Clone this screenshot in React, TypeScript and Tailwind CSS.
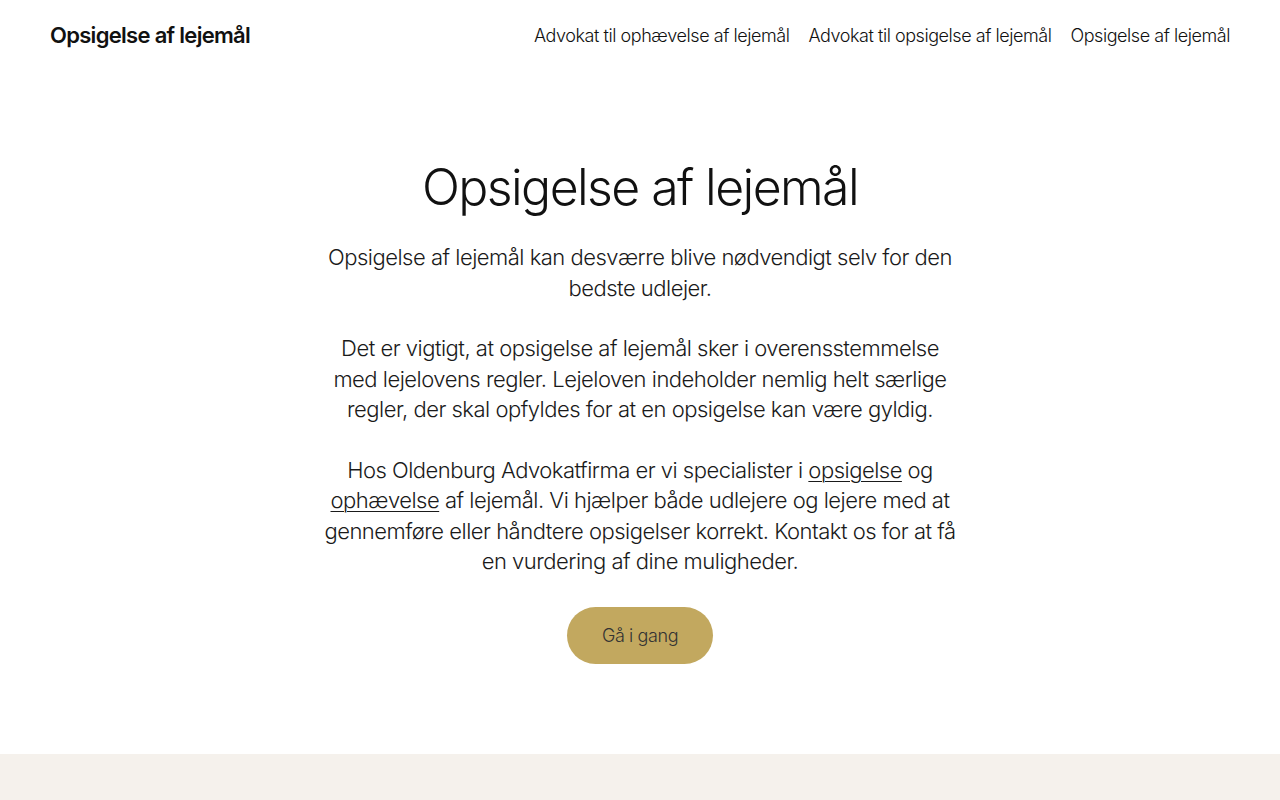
const navLinks = [
  "Advokat til ophævelse af lejemål",
  "Advokat til opsigelse af lejemål",
  "Opsigelse af lejemål",
];

const App = () => {
  return (
    <div className="min-h-screen bg-white text-[#111] font-['Inter',sans-serif]">
      {/* HEADER */}
      <header className="flex h-[70px] items-center justify-between px-[50px]">
        <a className="text-[22px] font-semibold tracking-[-0.7px] text-[#111]">
          Opsigelse af lejemål
        </a>
        <nav className="flex items-center gap-[19px]">
          {navLinks.map((link) => (
            <a key={link} className="text-[18px] font-light tracking-[-0.45px] text-[#111]">
              {link}
            </a>
          ))}
        </nav>
      </header>

      {/* HERO */}
      <section className="flex h-[684px] flex-col items-center pt-[84px]">
        <h1 className="text-[50px] font-light leading-[66px] tracking-[-1.6px] text-[#111]">
          Opsigelse af lejemål
        </h1>
        <div className="mt-[22px] w-[640px] text-center text-[22px] font-light leading-[30.5px] tracking-[-0.5px] text-[#1a1a1a]">
          <p>Opsigelse af lejemål kan desværre blive nødvendigt selv for den bedste udlejer.</p>
          <p className="mt-[30px]">
            Det er vigtigt, at opsigelse af lejemål sker i overensstemmelse med lejelovens regler.
            Lejeloven indeholder nemlig helt særlige regler, der skal opfyldes for at en opsigelse
            kan være gyldig.
          </p>
          <p className="mt-[30px]">
            Hos Oldenburg Advokatfirma er vi specialister i{" "}
            <a className="underline underline-offset-[3px] decoration-1">opsigelse</a> og{" "}
            <a className="underline underline-offset-[3px] decoration-1">ophævelse</a> af lejemål. Vi
            hjælper både udlejere og lejere med at gennemføre eller håndtere opsigelser korrekt.
            Kontakt os for at få en vurdering af dine muligheder.
          </p>
        </div>
        <button className="mt-[30px] flex h-[57px] w-[146px] items-center justify-center rounded-full bg-[#c2a85f] text-[18px] font-light tracking-[-0.4px] text-[#333]">
          Gå i gang
        </button>
      </section>

      {/* FOOTER BAND */}
      <div className="h-[46px] bg-[#f5f1ec]" />
    </div>
  );
};

export default App;
